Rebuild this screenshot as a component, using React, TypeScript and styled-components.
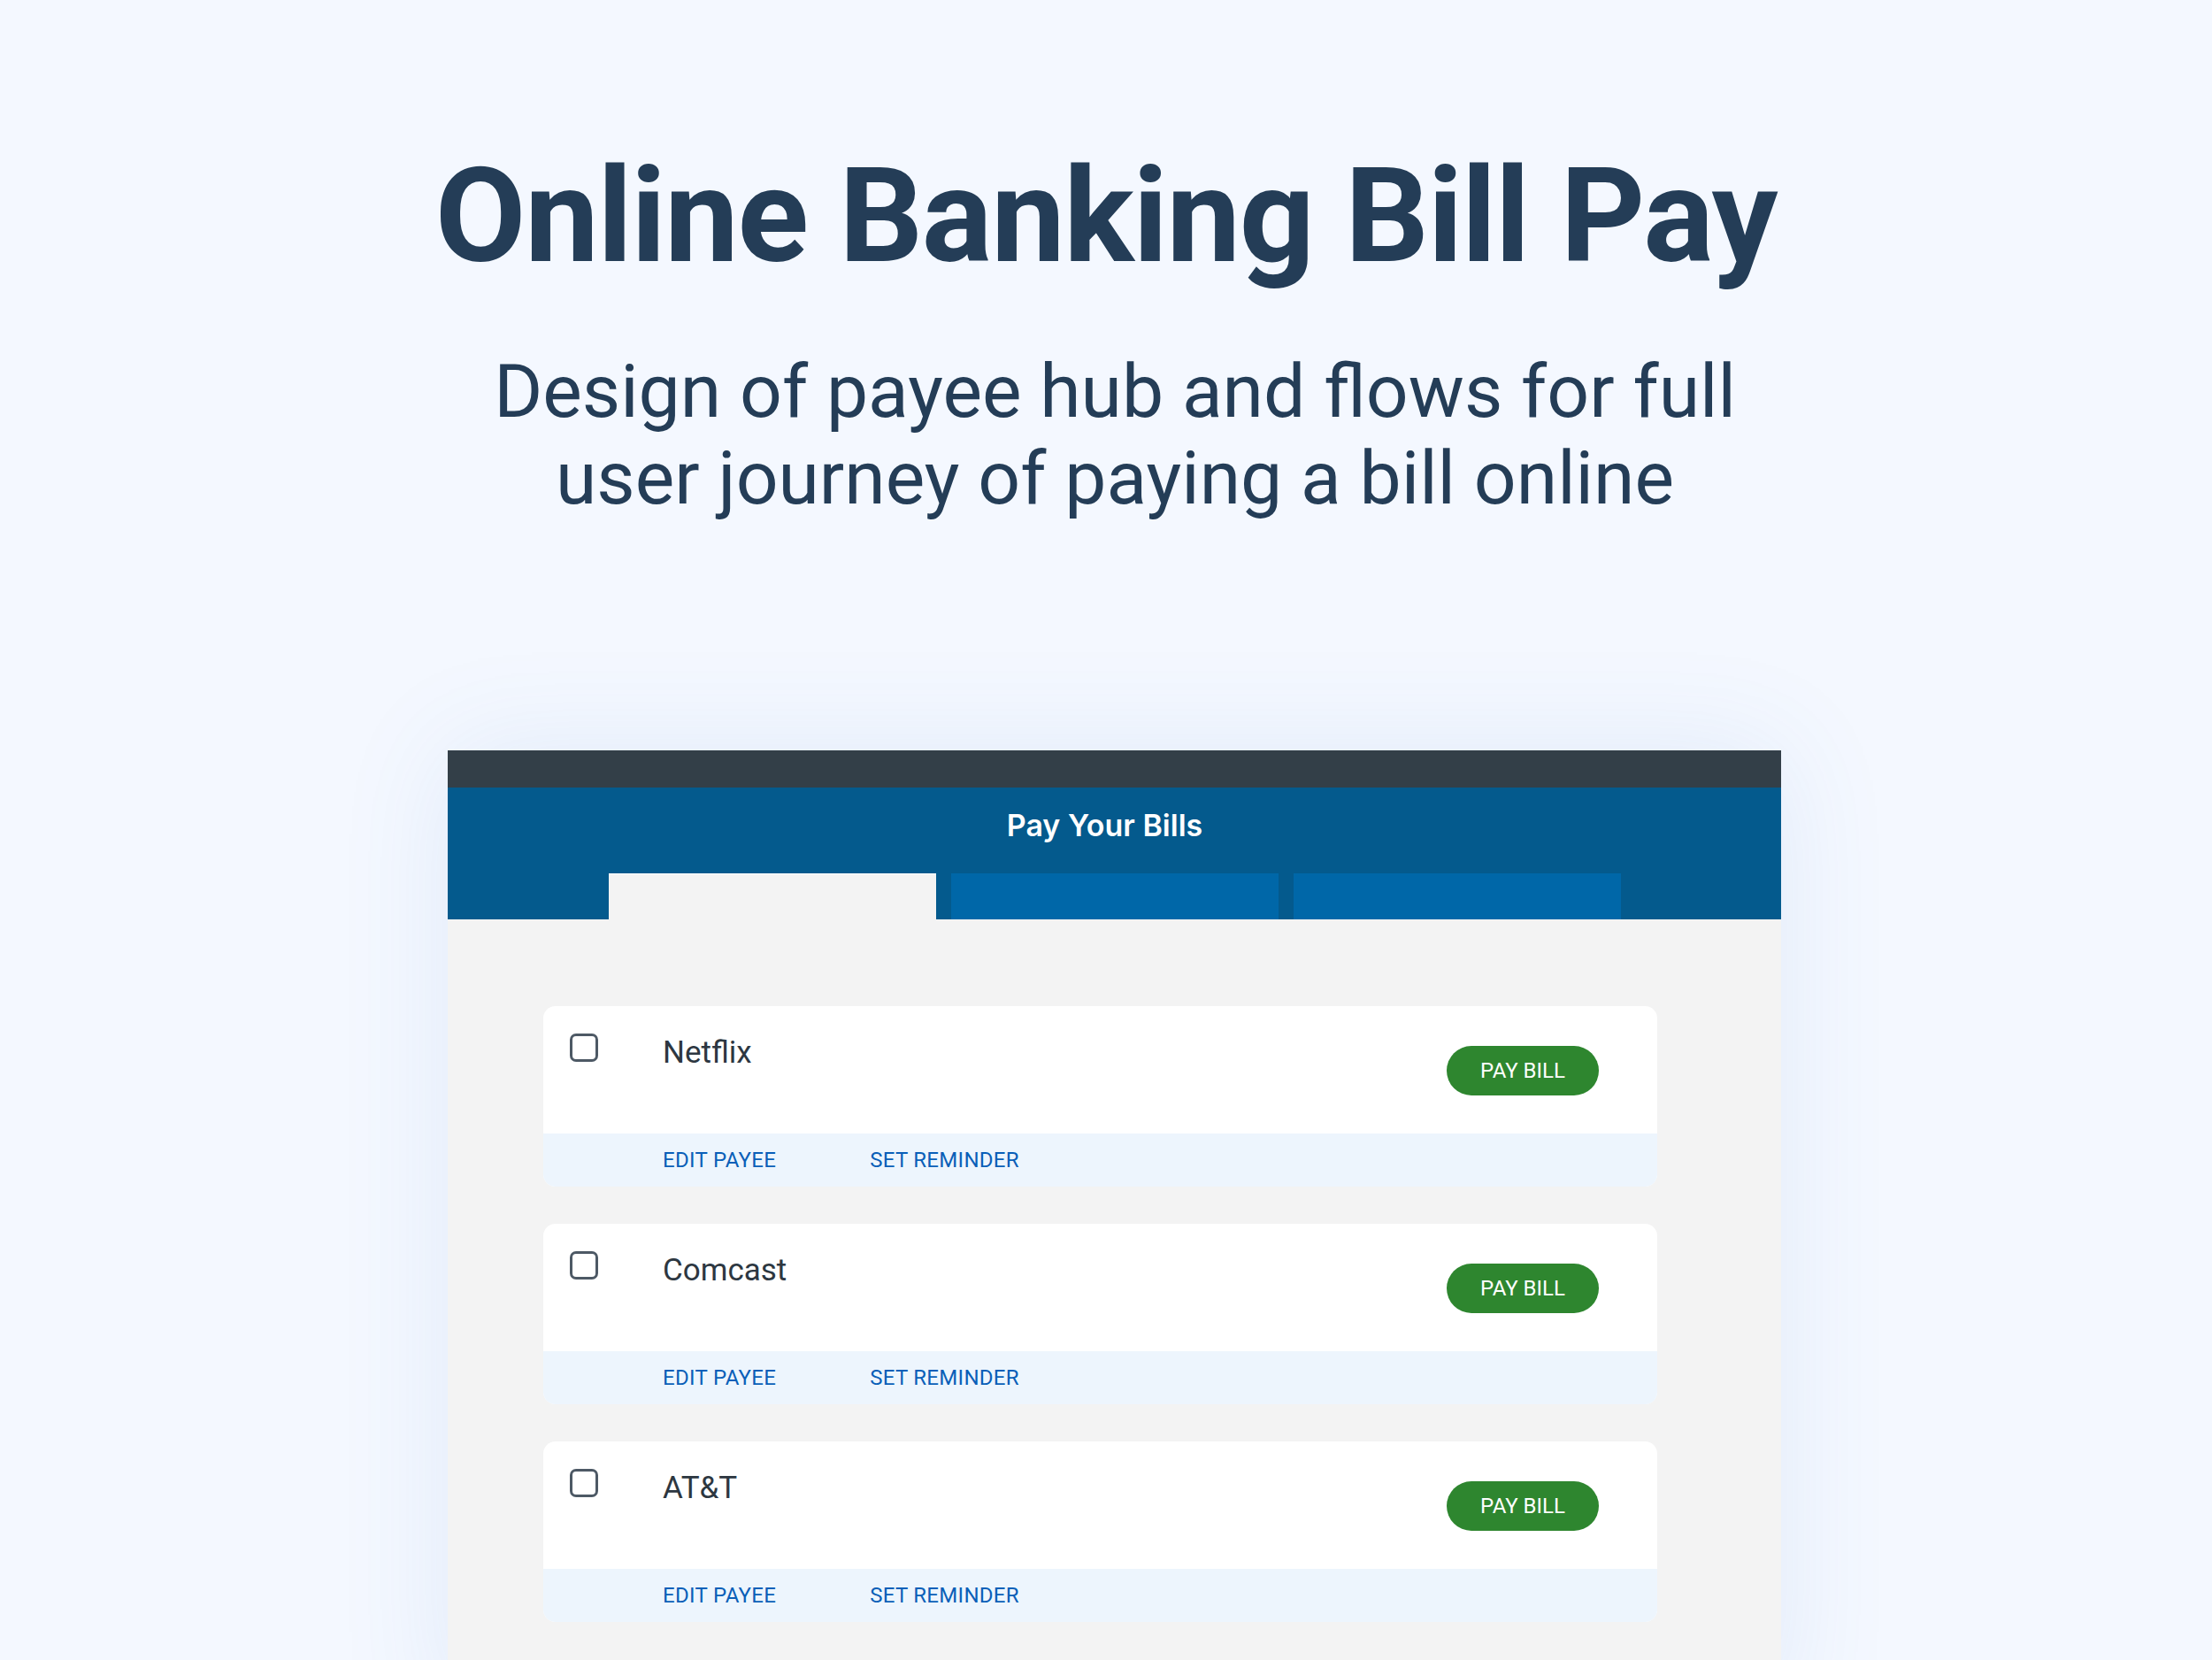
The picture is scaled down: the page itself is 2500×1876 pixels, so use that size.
import styled, { createGlobalStyle } from "styled-components";

const GlobalStyle = createGlobalStyle`
  html, body {
    margin: 0;
    padding: 0;
    height: 1876px;
    overflow: hidden;
    background: #f4f8ff;
  }
  * { box-sizing: border-box; }
`;

const Page = styled.div`
  width: 2500px;
  height: 1876px;
  overflow: hidden;
  padding-top: 154px;
  background: #f4f8ff;
  font-family: Roboto, "Liberation Sans", sans-serif;
`;

const Title = styled.h1`
  margin: 0;
  text-align: center;
  font-size: 149px;
  line-height: 180px;
  font-weight: 700;
  color: #243d57;
  letter-spacing: -1.4px;
`;

const Subtitle = styled.p`
  margin: 60px 0 0;
  text-align: center;
  font-size: 84px;
  line-height: 98px;
  font-weight: 400;
  color: #243d57;
  padding-left: 20px;
`;

const Panel = styled.div`
  width: 1507px;
  margin: 258px 0 0 calc(50% - 744px);
  box-shadow: 0 0 120px rgba(70, 120, 200, 0.1);
`;

const TopBar = styled.div`
  height: 42px;
  background: #333f48;
`;

const Header = styled.div`
  height: 149px;
  background: #045a8d;
  padding-top: 22px;
  display: flex;
  flex-direction: column;
  align-items: center;
`;

const HeaderTitle = styled.div`
  font-family: Inter, "Liberation Sans", sans-serif;
  font-size: 34px;
  line-height: 42px;
  font-weight: 600;
  color: #ffffff;
  margin-right: 22px;
`;

const Tabs = styled.div`
  margin-top: 33px;
  display: flex;
  gap: 17px;
`;

const Tab = styled.div<{ $active?: boolean }>`
  width: 370px;
  height: 52px;
  background: ${(p) => (p.$active ? "#f3f3f3" : "#0067a8")};
  border-top: ${(p) => (p.$active ? "1px solid #ffffff" : "none")};
`;

const Body = styled.div`
  background: #f3f3f3;
  min-height: 900px;
  padding: 98px 140px 0 108px;
  display: flex;
  flex-direction: column;
  gap: 42px;
`;

const Card = styled.div`
  background: #ffffff;
  border-radius: 14px;
  overflow: hidden;
`;

const CardMain = styled.div`
  height: 144px;
  padding: 31px 66px 0 30px;
  display: flex;
  align-items: flex-start;
`;

const Checkbox = styled.div`
  width: 32px;
  height: 32px;
  border: 3px solid #4d5965;
  border-radius: 7px;
  flex-shrink: 0;
`;

const PayeeName = styled.div`
  margin: 1px 0 0 73px;
  font-size: 35px;
  line-height: 42px;
  color: #2d3741;
  flex: 1;
`;

const PayButton = styled.button`
  margin-top: 14px;
  width: 172px;
  height: 56px;
  border: none;
  border-radius: 28px;
  background: #2e862f;
  color: #ffffff;
  font-family: Roboto, "Liberation Sans", sans-serif;
  font-size: 24px;
  padding: 0;
  cursor: pointer;
`;

const CardFooter = styled.div`
  height: 60px;
  background: #edf5fd;
  padding-left: 135px;
  display: flex;
  align-items: center;
  gap: 106px;
`;

const FooterLink = styled.a`
  font-size: 24px;
  letter-spacing: 0.3px;
  color: #0a5fb8;
  text-decoration: none;
  cursor: pointer;
`;

const payees = ["Netflix", "Comcast", "AT&T"];

function PayeeCard(props: { name: string }) {
  return (
    <Card>
      <CardMain>
        <Checkbox />
        <PayeeName>{props.name}</PayeeName>
        <PayButton>PAY BILL</PayButton>
      </CardMain>
      <CardFooter>
        <FooterLink>EDIT PAYEE</FooterLink>
        <FooterLink>SET REMINDER</FooterLink>
      </CardFooter>
    </Card>
  );
}

export default function App() {
  return (
    <>
      <GlobalStyle />
      <Page>
        <Title>Online Banking Bill Pay</Title>
        <Subtitle>
          Design of payee hub and flows for full
          <br />
          user journey of paying a bill online
        </Subtitle>
        <Panel>
          <TopBar />
          <Header>
            <HeaderTitle>Pay Your Bills</HeaderTitle>
            <Tabs>
              <Tab $active />
              <Tab />
              <Tab />
            </Tabs>
          </Header>
          <Body>
            {payees.map((name) => (
              <PayeeCard key={name} name={name} />
            ))}
          </Body>
        </Panel>
      </Page>
    </>
  );
}
